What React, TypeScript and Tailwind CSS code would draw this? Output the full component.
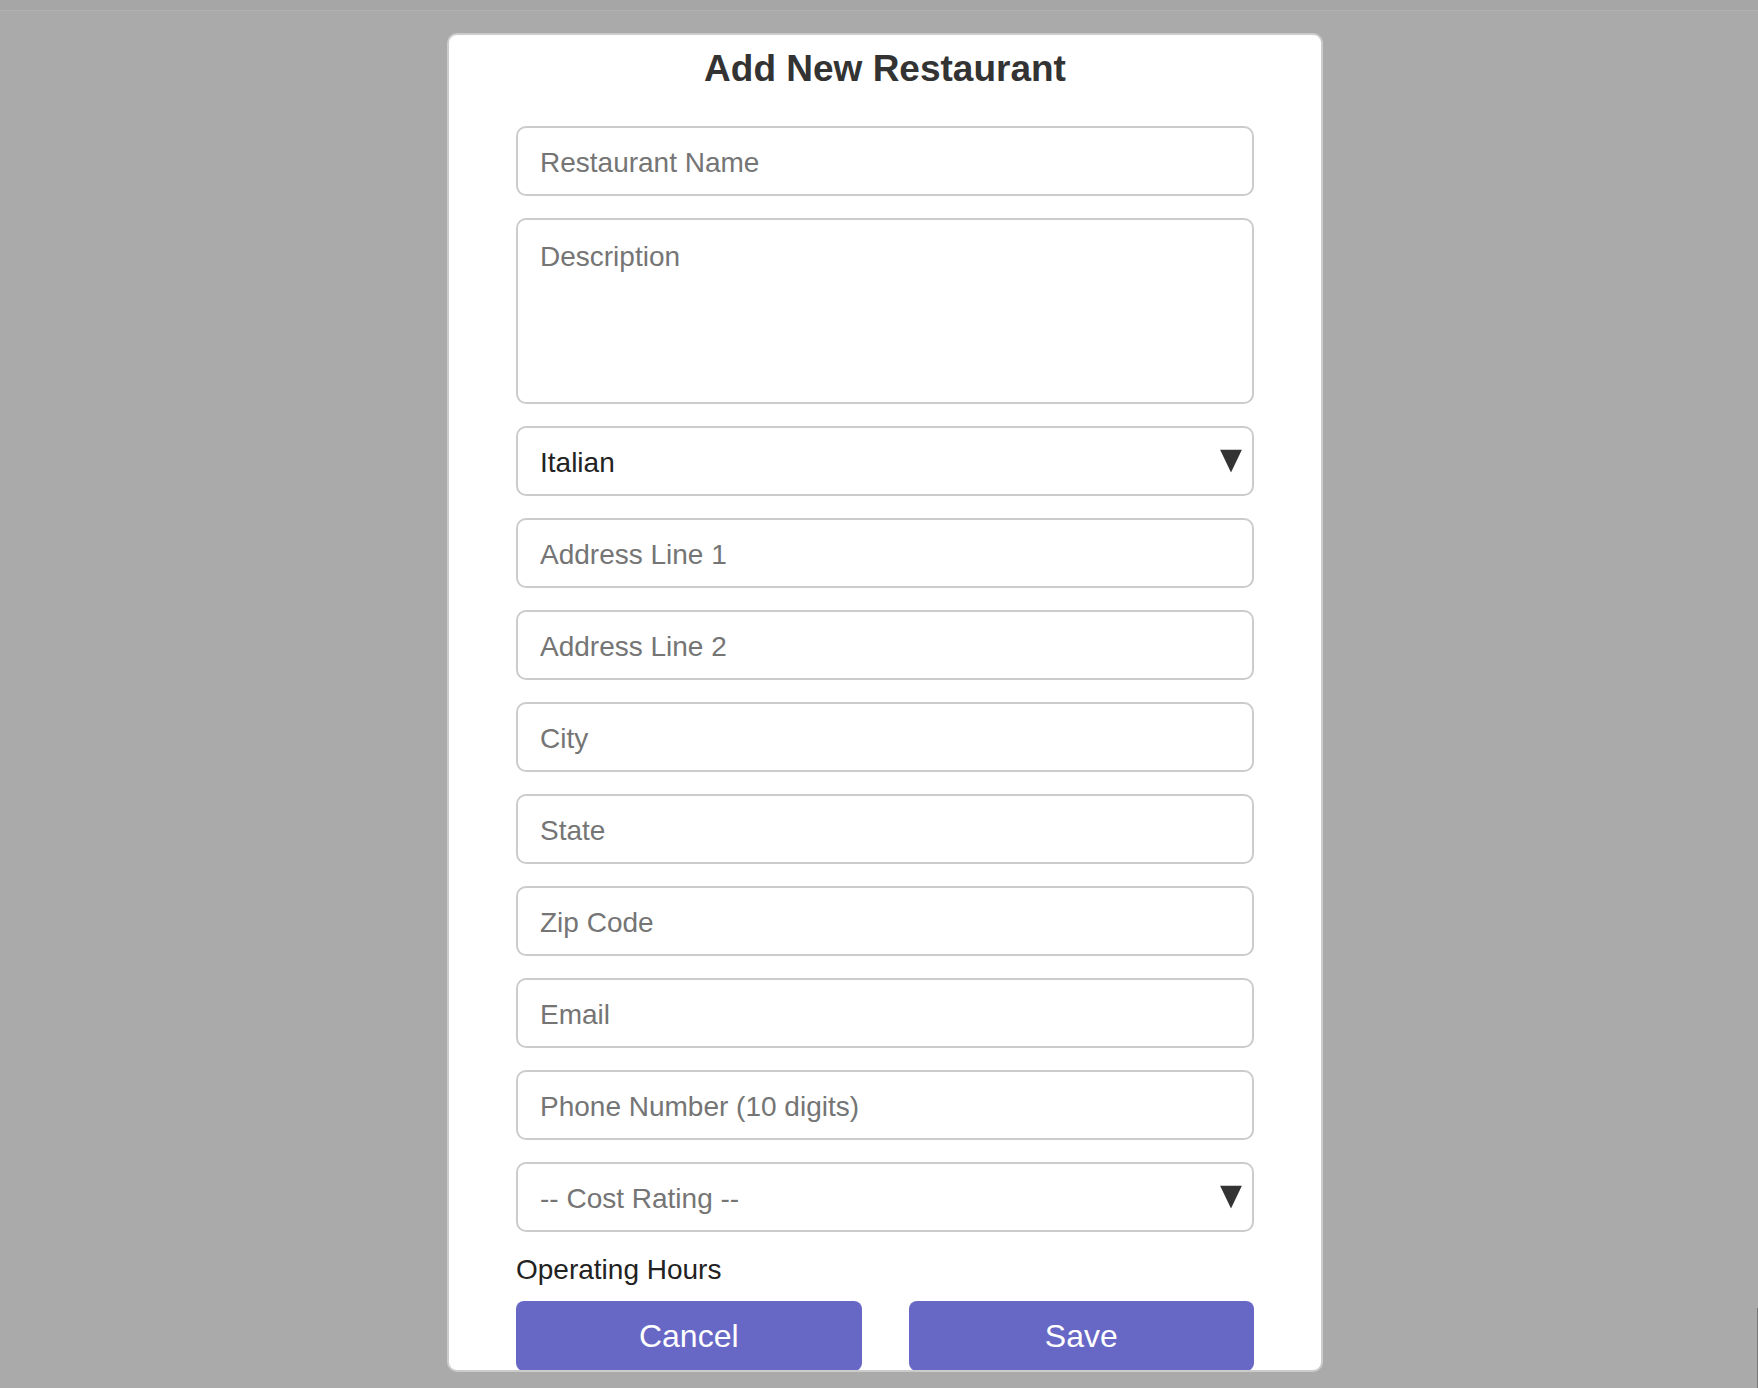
import React from "react";

const font = { fontFamily: '"Liberation Sans", Arial, sans-serif' };

function Caret() {
  return (
    <svg
      className="pointer-events-none absolute right-[12px] top-1/2 -translate-y-1/2"
      width="22"
      height="23"
      viewBox="0 0 22 23"
    >
      <polygon points="0,0 22,0 11,23" fill="#333333" />
    </svg>
  );
}

const field =
  "w-full h-[70px] bg-white border-2 border-[#cccccc] rounded-[10px] px-[22px] pt-[3px] text-[28px] text-[#222222] placeholder:text-[#757575] outline-none";

export default function App() {
  const inputs = ["Address Line 1", "Address Line 2", "City", "State", "Zip Code", "Email", "Phone Number (10 digits)"];

  return (
    <div className="relative h-[1388px] overflow-hidden bg-[#aaaaaa]" style={font}>
      <div className="h-[11px] bg-[#a6a6a6] border-b border-[#b0b0b0]" />

      <div className="ml-[447px] mt-[22px] h-[1339px] w-[876px] overflow-hidden rounded-[10px] border-2 border-[#cccccc] bg-white px-[67px]">
        <h2 className="mt-[13px] text-center text-[37px] font-bold leading-[42px] text-[#333333]">
          Add New Restaurant
        </h2>

        <form className="mt-[36px] flex flex-col gap-[22px]" onSubmit={(e) => e.preventDefault()}>
          <input className={field} placeholder="Restaurant Name" />
          <textarea
            className="h-[186px] w-full resize-none rounded-[10px] border-2 border-[#cccccc] bg-white px-[22px] pb-[20px] pt-[21px] text-[28px] leading-[32px] text-[#222222] outline-none placeholder:text-[#757575]"
            placeholder="Description"
          />

          <div className="relative">
            <select className={`${field} appearance-none`} defaultValue="Italian">
              <option>Italian</option>
              <option>Mexican</option>
              <option>Chinese</option>
            </select>
            <Caret />
          </div>

          {inputs.map((p) => (
            <input key={p} className={field} placeholder={p} />
          ))}

          <div className="relative">
            <select className={`${field} appearance-none text-[#757575]`} defaultValue="">
              <option value="" disabled>
                -- Cost Rating --
              </option>
              <option value="1">$</option>
              <option value="2">$$</option>
              <option value="3">$$$</option>
            </select>
            <Caret />
          </div>
        </form>

        <div className="mt-[22px] text-[28px] leading-[32px] text-[#222222]">Operating Hours</div>

        <div className="mt-[15px] flex gap-[47px]">
          <button className="h-[70px] flex-1 rounded-[8px] bg-[#6767c6] text-[32px] text-white">Cancel</button>
          <button className="h-[70px] flex-1 rounded-[8px] bg-[#6767c6] text-[32px] text-white">Save</button>
        </div>
      </div>

      <div className="absolute bottom-0 right-0 h-[80px] w-px bg-[#777777]" />
    </div>
  );
}
